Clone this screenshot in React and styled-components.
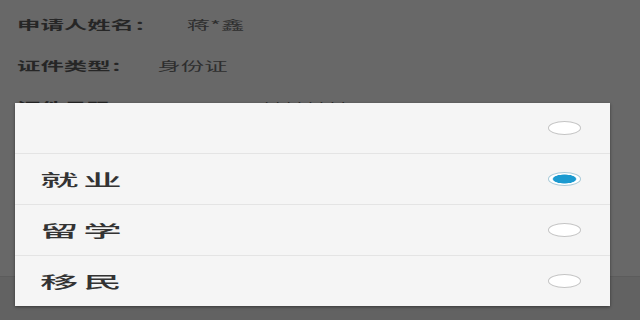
import React from "react";
import styled, { createGlobalStyle } from "styled-components";

const GlobalStyle = createGlobalStyle`
  html, body {
    margin: 0;
    padding: 0;
    background: #686868;
  }
  body {
    font-family: "Noto Sans CJK SC", "Noto Sans", sans-serif;
  }
`;

const OPTIONS = [
  { id: "none", label: "" },
  { id: "job", label: "就业" },
  { id: "study", label: "留学" },
  { id: "migrate", label: "移民" },
];

const App = () => {
  const [picked, setPicked] = React.useState("job");

  return (
    <Page>
      <GlobalStyle />
      <InfoList>
        <InfoLine>
          <Stretch $sx={1.95}>
            <Label>申请人姓名：</Label>
            <Value $gap={15}>蒋*鑫</Value>
          </Stretch>
        </InfoLine>
        <InfoLine>
          <Stretch $sx={1.95}>
            <Label>证件类型：</Label>
            <Value $gap={12}>身份证</Value>
          </Stretch>
        </InfoLine>
        <InfoLine>
          <Stretch $sx={1.95}>
            <Label>证件号码：</Label>
            <Value $gap={12}>33010219********12</Value>
          </Stretch>
        </InfoLine>
      </InfoList>
      <BottomBar />

      <Dialog>
        {OPTIONS.map((opt) => (
          <OptionRow key={opt.id} onClick={() => setPicked(opt.id)}>
            <Stretch $sx={2.4}>
              <OptionText>{opt.label}</OptionText>
            </Stretch>
            <Radio $checked={picked === opt.id} />
          </OptionRow>
        ))}
      </Dialog>
    </Page>
  );
};

export default App;

// STYLES

const Page = styled.div`
  position: relative;
  width: 640px;
  height: 320px;
  overflow: hidden;
  background: #686868;
  display: flex;
  flex-direction: column;
`;

const InfoList = styled.div`
  display: flex;
  flex-direction: column;
  padding: 3px 0 0 17px;
  flex: 1;
`;

const InfoLine = styled.div`
  height: 41px;
  line-height: 41px;
  white-space: nowrap;
`;

const Stretch = styled.span`
  display: inline-block;
  transform: scaleX(${(p) => p.$sx});
  transform-origin: left center;
  white-space: nowrap;
`;

const Label = styled.span`
  font-size: 12px;
  font-weight: 700;
  color: #262626;
`;

const Value = styled.span`
  font-size: 12px;
  color: #2e2e2e;
  margin-left: ${(p) => p.$gap}px;
`;

const BottomBar = styled.div`
  height: 43px;
  background: #626262;
  border-top: 1px solid #5c5c5c;
`;

const Dialog = styled.div`
  position: absolute;
  left: 15px;
  top: 103px;
  width: 595px;
  background: #f5f5f5;
  box-shadow: 0 1px 3px rgba(0, 0, 0, 0.45);
  display: flex;
  flex-direction: column;
`;

const OptionRow = styled.div`
  height: 50px;
  display: flex;
  align-items: center;
  justify-content: space-between;
  padding: 0 29px 0 25px;
  border-top: 1px solid #e4e4e4;
  cursor: pointer;

  &:first-child {
    border-top: none;
  }
`;

const OptionText = styled.span`
  font-size: 16px;
  font-weight: 500;
  letter-spacing: 2px;
  color: #333333;
  line-height: 1;
`;

const Radio = styled.span`
  box-sizing: border-box;
  width: 33px;
  height: 14px;
  border-radius: 50%;
  flex-shrink: 0;
  border: 1.5px solid ${(p) => (p.$checked ? "#a9cbd9" : "#c4c4c4")};
  background: ${(p) =>
    p.$checked
      ? "radial-gradient(ellipse at center, #1b9ad0 0 50%, #ffffff 56% 100%)"
      : "#ffffff"};
`;
